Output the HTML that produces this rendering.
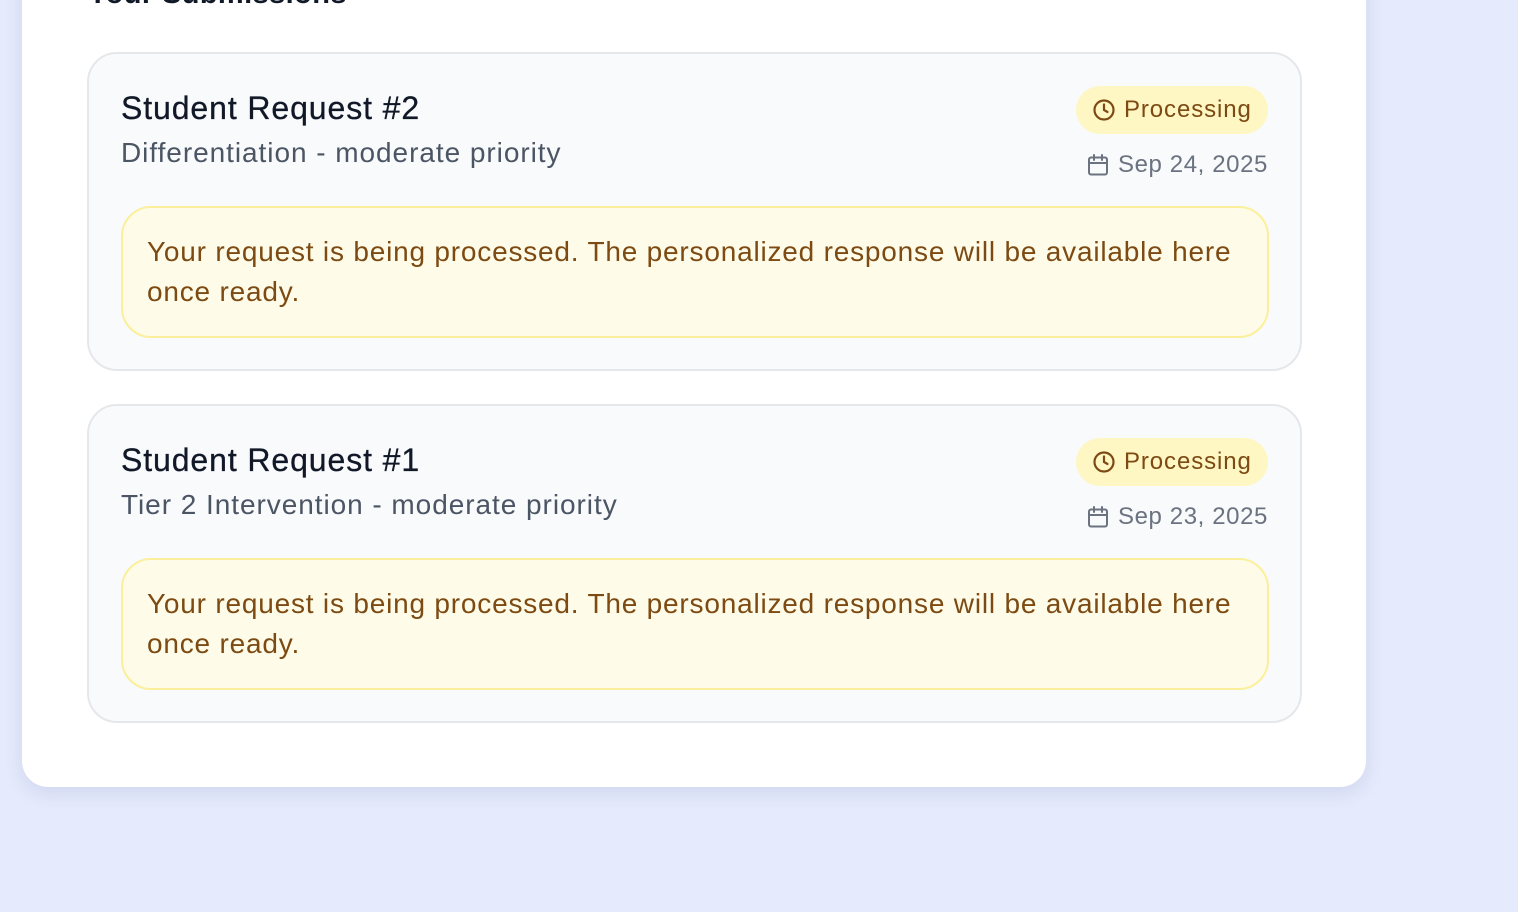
<!DOCTYPE html>
<html><head><style>
*{margin:0;padding:0;box-sizing:border-box}
body{width:1518px;height:912px;background:#e5eafc;font-family:"Liberation Sans",sans-serif;position:relative;overflow:hidden}
.panel{position:absolute;left:22px;top:-60px;width:1344px;height:847px;background:#fff;border-radius:26px;box-shadow:0 6px 18px rgba(60,70,140,.12)}
.h{position:absolute;left:88px;top:-22px;font-size:29px;font-weight:bold;color:#111827;letter-spacing:.4px}
.card{position:absolute;left:87px;width:1215px;height:319px;background:#f8fafc;border:2px solid #e5e7eb;border-radius:30px}
.t{position:absolute;left:32px;top:36px;font-size:32px;color:#111827;letter-spacing:.9px;-webkit-text-stroke:.3px #111827}
.s{position:absolute;left:32px;top:83px;font-size:28px;color:#4b5563;letter-spacing:.95px}
.badge{position:absolute;right:32px;top:32px;height:48px;width:192px;background:#fef7c3;border-radius:24px;color:#7c4a12;font-size:24px;display:flex;align-items:center;padding-left:16px;gap:8px;letter-spacing:.9px}
.date{position:absolute;right:32px;top:97px;font-size:24px;color:#6b7280;display:flex;align-items:center;gap:8px;letter-spacing:.6px}
.msg{position:absolute;left:32px;top:152px;width:1148px;height:132px;background:#fefce8;border:2px solid #fbef9b;border-radius:30px;padding:24px 24px;font-size:28px;line-height:40px;color:#7c4a12;letter-spacing:.8px}
</style></head><body>
<div class="panel"></div>
<div class="h">Your Submissions</div>
<div class="card" style="top:52px">
<div class="t">Student Request #2</div>
<div class="s">Differentiation - moderate priority</div>
<div class="badge"><svg width="24" height="24" viewBox="0 0 24 24" fill="none" stroke="#7c4a12" stroke-width="2.2" stroke-linecap="round"><circle cx="12" cy="12" r="9.5"/><path d="M12 6.5V12l3.5 2"/></svg>Processing</div>
<div class="date"><svg width="24" height="24" viewBox="0 0 24 24" fill="none" stroke="#6b7280" stroke-width="2" stroke-linecap="round"><rect x="3" y="4.5" width="18" height="17" rx="2"/><path d="M3 10h18M8 2v5M16 2v5"/></svg>Sep 24, 2025</div>
<div class="msg">Your request is being processed. The personalized response will be available here once ready.</div>
</div>
<div class="card" style="top:404px">
<div class="t">Student Request #1</div>
<div class="s">Tier 2 Intervention - moderate priority</div>
<div class="badge"><svg width="24" height="24" viewBox="0 0 24 24" fill="none" stroke="#7c4a12" stroke-width="2.2" stroke-linecap="round"><circle cx="12" cy="12" r="9.5"/><path d="M12 6.5V12l3.5 2"/></svg>Processing</div>
<div class="date"><svg width="24" height="24" viewBox="0 0 24 24" fill="none" stroke="#6b7280" stroke-width="2" stroke-linecap="round"><rect x="3" y="4.5" width="18" height="17" rx="2"/><path d="M3 10h18M8 2v5M16 2v5"/></svg>Sep 23, 2025</div>
<div class="msg">Your request is being processed. The personalized response will be available here once ready.</div>
</div>
</body></html>
